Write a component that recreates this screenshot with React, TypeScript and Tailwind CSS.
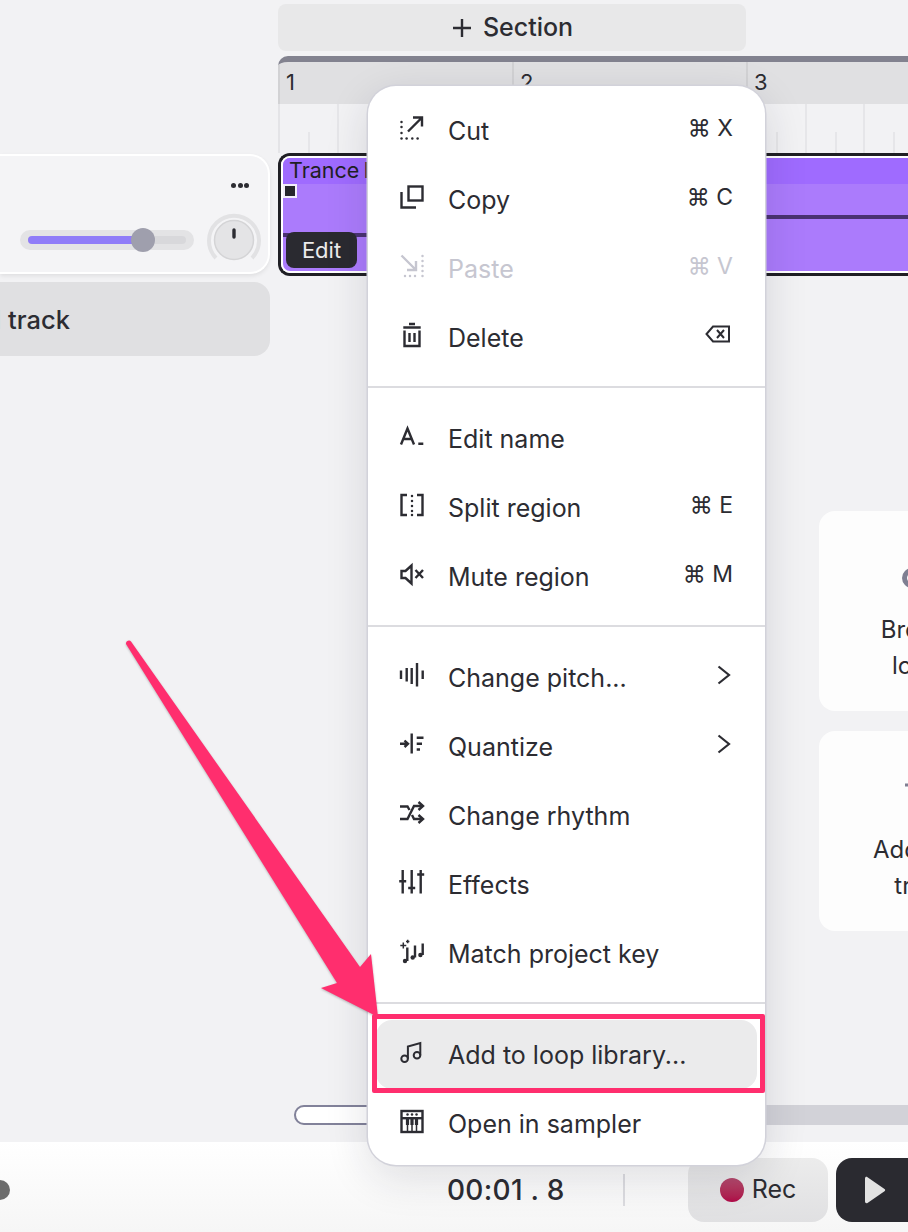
import React from 'react';

// 24px stroke icons for the context menu
const Svg = ({ children }: { children: React.ReactNode }) => (
  <svg width="24" height="24" viewBox="0 0 24 24" fill="none" stroke="currentColor" strokeWidth="2.4" className="shrink-0 overflow-visible mb-[5px]">
    {children}
  </svg>
);

const Dots = ({ pts }: { pts: number[][] }) => (
  <>
    {pts.map(([x, y]) => (
      <circle key={`${x}-${y}`} cx={x} cy={y} r="1.25" fill="currentColor" stroke="none" />
    ))}
  </>
);

const icons: Record<string, React.ReactNode> = {
  cut: (
    <Svg>
      <path d="M13 1.5H22V10.5M22 1.5L8 15.5" />
      <Dots pts={[[1.5, 6], [1.5, 11], [1.5, 17], [1.5, 22.5], [6.6, 22.5], [12.3, 22.5], [17.6, 22.5]]} />
    </Svg>
  ),
  copy: (
    <Svg>
      <rect x="8.5" y="1.5" width="14" height="14" />
      <path d="M1.5 7V22.5H16" />
    </Svg>
  ),
  paste: (
    <Svg>
      <path d="M16 7V16H7M16 16L1.5 1.5" />
      <Dots pts={[[22.5, 2], [22.5, 7], [22.5, 12], [22.5, 17], [22.5, 22], [5, 22], [10, 22], [15, 22]]} />
    </Svg>
  ),
  trash: (
    <Svg>
      <path d="M9 1H15M3.3 4.5H20.7M4.5 7.5V23H19.5V7.5M9.5 10V19M14.5 10V19" />
    </Svg>
  ),
  name: (
    <Svg>
      <path d="M1 20.5L7.5 4.5L14 20.5M3.2 15H11.8M18.3 19.8H23.3" />
    </Svg>
  ),
  split: (
    <Svg>
      <path d="M7 2H1.5V22H7M17 2H22.5V22H17" />
      <Dots pts={[[12, 3], [12, 8], [12, 13], [12, 18], [12, 22]]} />
    </Svg>
  ),
  mute: (
    <Svg>
      <path d="M1.5 9H5.5L11.5 3.5V21.5L5.5 16H1.5Z" />
      <path d="M15.5 8L23 16M23 8L15.5 16" />
    </Svg>
  ),
  pitch: (
    <Svg>
      <path d="M1 7.5V16M6.7 5V18.5M11.7 5V21M17 0V23.5M22.7 7.5V16" />
    </Svg>
  ),
  quantize: (
    <Svg>
      <path d="M0 11.8H7M4.5 8.5L8 11.8L4.5 15M11.7 1.5V21.5M16.7 5.8H23.5M16.7 11.8H22M16.7 17.5H20" />
    </Svg>
  ),
  rhythm: (
    <Svg>
      <path d="M0 5.5H7.5L9.5 9M12 14L14 18H22M0 18H7.5L14 5H22" />
      <path d="M18.5 1L23 5L18.5 9M18.5 14L23 18L18.5 22" />
    </Svg>
  ),
  effects: (
    <Svg>
      <path d="M2.7 0V23.5M11.7 0V23.5M20.7 0V23.5M-0.8 11.2H6.2M8.2 18H15.2M17.2 4.5H24.2" />
    </Svg>
  ),
  key: (
    <Svg>
      <path d="M7.3 8.5V22M15 6.5V18.5M22.7 4.5V16" />
      <circle cx="5" cy="22" r="2.2" fill="currentColor" stroke="none" />
      <circle cx="12.7" cy="18.5" r="2.2" fill="currentColor" stroke="none" />
      <circle cx="20.4" cy="16" r="2.2" fill="currentColor" stroke="none" />
      <path d="M3.3 3.5V9.5M0.3 6.5H6.3M7.7 0.8V4.2M6 2.5H9.4" strokeWidth="1.5" />
    </Svg>
  ),
  note: (
    <Svg>
      <circle cx="4.6" cy="18.8" r="3.3" strokeWidth="2" />
      <circle cx="17" cy="15.2" r="3.3" strokeWidth="2" />
      <path d="M7.9 18.8V6.5L20.3 3V15.2" strokeWidth="2" />
    </Svg>
  ),
  sampler: (
    <Svg>
      <rect x="1.5" y="2" width="21" height="21" />
      <path d="M1.5 9.2H22.5" />
      <Dots pts={[[7.5, 5.6], [12, 5.6], [16.5, 5.6]]} />
      <path d="M7.5 9V22M12 9V22M16.5 9V22" strokeWidth="1.5" />
      <path d="M7.5 9V16M12 9V16M16.5 9V16" strokeWidth="3.2" />
    </Svg>
  ),
};

const Chevron = () => (
  <svg width="14" height="20" viewBox="0 0 14 20" fill="none" stroke="currentColor" strokeWidth="2.2" className="mb-[5px] mr-[2px]">
    <path d="M1.5 1.5L12 10L1.5 18.5" />
  </svg>
);

const Backspace = () => (
  <svg width="26" height="18" viewBox="0 0 26 18" fill="none" stroke="currentColor" strokeWidth="2" className="mb-[7px] mr-[2px]">
    <path d="M8 1.5H24V16.5H8L1.5 9Z" />
    <path d="M12 5L19 13M19 5L12 13" />
  </svg>
);

type MenuRow = { icon: string; label: string; keys?: string; right?: React.ReactNode; muted?: boolean; active?: boolean };

const groups: MenuRow[][] = [
  [
    { icon: 'cut', label: 'Cut', keys: '⌘ X' },
    { icon: 'copy', label: 'Copy', keys: '⌘ C' },
    { icon: 'paste', label: 'Paste', keys: '⌘ V', muted: true },
    { icon: 'trash', label: 'Delete', right: <Backspace /> },
  ],
  [
    { icon: 'name', label: 'Edit name' },
    { icon: 'split', label: 'Split region', keys: '⌘ E' },
    { icon: 'mute', label: 'Mute region', keys: '⌘ M' },
  ],
  [
    { icon: 'pitch', label: 'Change pitch...', right: <Chevron /> },
    { icon: 'quantize', label: 'Quantize', right: <Chevron /> },
    { icon: 'rhythm', label: 'Change rhythm' },
    { icon: 'effects', label: 'Effects' },
    { icon: 'key', label: 'Match project key' },
  ],
  [
    { icon: 'note', label: 'Add to loop library...', active: true },
    { icon: 'sampler', label: 'Open in sampler' },
  ],
];

const Row = ({ row }: { row: MenuRow }) => (
  <div
    className={`flex h-[69px] items-center gap-6 rounded-[16px] px-6 ${row.muted ? 'text-[#c6c6d0]' : 'text-[#2c2c32]'} ${row.active ? 'bg-[#ebebec]' : ''}`}
  >
    {icons[row.icon]}
    <span className="mt-[2px] flex-1 text-[25px] leading-none">{row.label}</span>
    {row.keys && <span className="mb-[5px] text-[23px] leading-none">{row.keys}</span>}
    {row.right}
  </div>
);

const ContextMenu = () => (
  <div className="absolute left-[368px] top-[86px] z-10 w-[397px] rounded-[28px] bg-white px-2 pb-[7px] pt-[10px] shadow-[0_0_0_1.5px_#d2d2da,0_12px_44px_rgba(30,30,50,0.14)]">
    {groups.map((group, i) => (
      <div key={i}>
        {i > 0 && <div className="-mx-2 mb-4 mt-[14px] h-[2px] bg-[#dcdce0]" />}
        {group.map((row) => (
          <Row key={row.label} row={row} />
        ))}
      </div>
    ))}
  </div>
);

const TrackCard = () => (
  <div className="flex h-[120px] flex-col items-end rounded-r-[20px] border-2 border-l-0 border-white bg-[#f4f4f6] pr-[7px] shadow-[0_2px_4px_rgba(0,0,0,0.08)]">
    <div className="mr-[12px] mt-[27px] flex gap-[1.5px]">
      <span className="h-[5px] w-[5px] rounded-full bg-[#2c2c32]" />
      <span className="h-[5px] w-[5px] rounded-full bg-[#2c2c32]" />
      <span className="h-[5px] w-[5px] rounded-full bg-[#2c2c32]" />
    </div>
    <div className="mt-[25px] flex items-center gap-[13px]">
      {/* volume slider */}
      <div className="relative flex h-5 w-[174px] items-center rounded-full bg-[#e3e3e5] px-2">
        <div className="h-2 w-full rounded-full bg-[#d8d8db]">
          <div className="h-2 w-[115px] rounded-full bg-[#8f7cf8]" />
        </div>
        <div className="absolute left-[111px] top-[-2px] h-6 w-6 rounded-full bg-[#9f9fad]" />
      </div>
      {/* pan knob */}
      <svg width="54" height="54" viewBox="0 0 54 54" fill="none">
        <path d="M9 45A25 25 0 1 1 45 45" stroke="#e2e2e4" strokeWidth="4" />
        <circle cx="27" cy="27" r="19.5" fill="#e4e4e6" stroke="#d4d4d6" strokeWidth="1.5" />
        <path d="M27 17V24" stroke="#2c2c32" strokeWidth="3.4" strokeLinecap="round" />
      </svg>
    </div>
  </div>
);

const TrackColumn = () => (
  <div className="flex w-[270px] shrink-0 flex-col gap-2 pt-[154px]">
    <TrackCard />
    <div className="flex h-[74px] items-center justify-end overflow-hidden rounded-r-[16px] bg-[#e0e0e2] pr-[200px] pt-[3px]">
      <span className="whitespace-nowrap text-[25.5px] font-medium text-[#2c2c32]">Add track</span>
    </div>
  </div>
);

const TimeRuler = () => (
  <>
    <div className="mt-[5px] h-[48px] w-[908px] overflow-hidden rounded-tl-[10px] border-t-[6px] border-[#82828f] bg-[#e0e0e2]">
      <div className="flex h-full">
        {['1', '2', '3', '4'].map((bar) => (
          <div key={bar} className="w-[234px] shrink-0 border-l-2 border-[#d2d2d4] pl-[6px] pt-[5px] text-[22px] leading-[30px] text-[#2c2c32]">
            {bar}
          </div>
        ))}
      </div>
    </div>
    <div className="flex h-[49px] border-l-2 border-[#e4e4e7]">
      {Array.from({ length: 11 }).map((_, i) => (
        <div key={i} className="relative w-[58.5px] shrink-0 border-r-2 border-[#e6e6e9]">
          <div className="absolute bottom-0 left-[28px] h-[21px] w-[2px] bg-[#e6e6e9]" />
        </div>
      ))}
    </div>
  </>
);

const Clip = () => (
  <div className="w-[900px] rounded-l-[12px] border-y-[3px] border-l-[3px] border-[#1f1f24]">
    <div className="relative h-[117px] overflow-hidden rounded-l-[9px] border-y-2 border-l-2 border-white bg-[#ab7bfc]">
      <div className="h-[26px] whitespace-nowrap bg-[#9f6bff] pl-[6px] text-[21.5px] leading-[25px] text-[#1f1f24] [word-spacing:-2px]">Trance I</div>
      <div className="absolute left-0 top-[75px] h-[4px] w-[120px] bg-[#4a3272]" />
      <div className="absolute left-[300px] top-[57px] h-[4px] w-[600px] bg-[#4a3272]" />
      <div className="absolute left-0 top-[26px] h-[14px] w-[14px] border-2 border-[#f1edf9] bg-[#26262c]" />
      <div className="absolute left-[3px] top-[74px] flex h-[36px] w-[71px] items-center justify-center rounded-[8px] bg-[#2a2a30] text-[22px] text-[#ececec]">
        Edit
      </div>
    </div>
  </div>
);

const HintCard = ({ lines, icon }: { lines: string[]; icon: React.ReactNode }) => (
  <div className="flex h-[200px] w-[204px] flex-col items-center rounded-[16px] bg-[#fdfdfd] pl-[4px] pt-[47px] text-center text-[24px] leading-[36px] text-[#2c2c32]">
    <div className="flex h-[40px] items-center">{icon}</div>
    <div className="mt-[14px]">
      {lines.map((line) => (
        <div key={line}>{line}</div>
      ))}
    </div>
  </div>
);

const LoopIcon = () => (
  <svg width="44" height="22" viewBox="0 0 44 22" fill="none" stroke="#7f7f92" strokeWidth="5">
    <circle cx="11" cy="11" r="7.5" />
    <circle cx="33" cy="11" r="7.5" />
  </svg>
);

const PlusIcon = () => (
  <svg width="36" height="36" viewBox="0 0 36 36" fill="none" stroke="#7f7f92" strokeWidth="3" className="-translate-y-[13px]">
    <path d="M0 18H36M18 0V36" />
  </svg>
);

const Timeline = () => (
  <div className="flex min-w-0 flex-1 flex-col">
    <div className="mt-1 flex h-[47px] w-[468px] items-center justify-center gap-[6px] rounded-[8px] bg-[#e8e8e9] pr-[4px] text-[25px] font-medium text-[#2c2c32]">
      <svg width="30" height="30" viewBox="0 0 30 30" fill="none" stroke="currentColor" strokeWidth="2.4">
        <path d="M6 15H24M15 6V24" />
      </svg>
      <span>Section</span>
    </div>
    <TimeRuler />
    <Clip />
    <div className="ml-[541px] mt-[235px] flex flex-col gap-5">
      <HintCard lines={['Browse', 'loops']} icon={<LoopIcon />} />
      <HintCard lines={['Add new', 'track']} icon={<PlusIcon />} />
    </div>
    {/* horizontal scrollbar */}
    <div className="ml-4 mt-[174px] h-5 w-[700px] rounded-full bg-[#d2d2d8]">
      <div className="h-5 w-[300px] rounded-full border-2 border-[#82829a] bg-white" />
    </div>
  </div>
);

const BottomBar = () => (
  <div className="flex h-[90px] items-center overflow-hidden bg-gradient-to-b from-white to-[#f6f6f6] pt-[6px] text-[#2c2c32]">
    <div className="-ml-[10px] h-5 w-5 shrink-0 rounded-full bg-[#6c6c6c]" />
    <div className="ml-[437px] w-[118px] shrink-0 whitespace-nowrap text-[28px] font-medium leading-none tracking-[0.3px]">00:01 . 8</div>
    <div className="ml-[58px] h-8 w-[2px] shrink-0 bg-[#dcdce0]" />
    <button className="ml-[63px] flex h-16 w-[140px] shrink-0 items-center justify-center gap-[8px] rounded-[16px] bg-gradient-to-b from-[#ececec] to-[#e0e0e2] text-[25px]">
      <span className="h-6 w-6 rounded-full bg-gradient-to-b from-[#b2486c] to-[#b00648]" />
      Rec
    </button>
    <button className="ml-2 flex h-16 w-[80px] shrink-0 items-center justify-center rounded-l-[16px] bg-[#2a2a30] pr-[2px]">
      <svg width="22" height="28" viewBox="0 0 22 28" fill="#e2e2e2">
        <path d="M1 2.5C1 1 2.4 0.4 3.5 1.2L20.5 13C21.4 13.6 21.4 14.6 20.5 15.2L3.5 27C2.4 27.7 1 27 1 25.6Z" />
      </svg>
    </button>
  </div>
);

// the pink annotation drawn over the screenshot
const Annotation = () => (
  <>
    <svg width="908" height="1232" viewBox="0 0 908 1232" className="pointer-events-none absolute left-0 top-0 z-20">
      <path
        d="M126 644C125.5 641 129.5 639.5 131 641.5L360 967L371 954L378 1017L321 988L337 983Z"
        fill="#ff2e6e"
        style={{ filter: 'drop-shadow(0.5px 1px 1px rgba(0,0,0,0.25))' }}
      />
    </svg>
    <div className="pointer-events-none absolute left-[372px] top-[1014px] z-20 h-[79px] w-[393px] rounded-[2px] border-[5px] border-[#ff2e6e]" />
  </>
);

export default function App() {
  return (
    <div className="relative flex h-[1232px] w-[908px] flex-col overflow-hidden bg-[#f2f2f4] font-['Inter','Noto_Sans',sans-serif]">
      <div className="flex min-h-0 flex-1 gap-2">
        <TrackColumn />
        <Timeline />
      </div>
      <BottomBar />
      <ContextMenu />
      <Annotation />
    </div>
  );
}
